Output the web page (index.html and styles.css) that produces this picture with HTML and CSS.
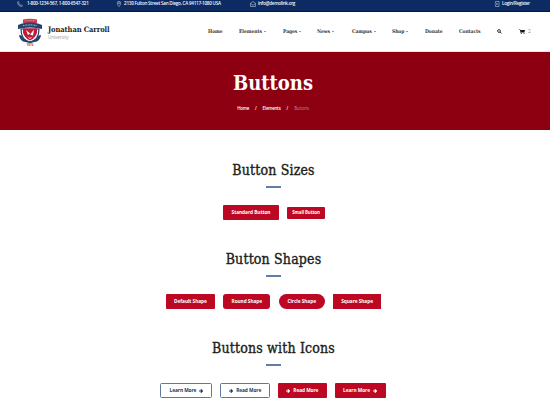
FILE: index.html
```
<!DOCTYPE html>
<html lang="en">
<head>
<meta charset="utf-8">
<title>Buttons - Jonathan Carroll University</title>
<link rel="stylesheet" href="styles.css">
</head>
<body>
<svg width="0" height="0" class="defs"><defs>
<symbol id="arrow" viewBox="0 0 10 10"><path d="M0 5h8M4.500 1L8.500 5L4.500 9" fill="none" stroke="currentColor" stroke-width="3"/></symbol>
</defs></svg>
<div class="topbar">
  <svg class="ico phone" viewBox="0 0 12 12"><path d="M2 1L1 2.500C1 7 5 11 9.500 11L11 10L9 7.800L7.500 8.700C5.800 8 4 6 3.400 4.500L4.300 3Z"/></svg>
  <span class="tel">1-800-1234-567, 1-800-6547-321</span>
  <svg class="ico pin" viewBox="0 0 12 12"><path d="M6 11.300C4 8.700 2.500 6.300 2.500 4.200a3.500 3.500 0 0 1 7 0C9.500 6.300 8 8.700 6 11.300Z"/><circle cx="6" cy="4.300" r="1.300"/></svg>
  <span class="addr">2130 Fulton Street San Diego, CA 94117-1080 USA</span>
  <svg class="ico mail" viewBox="0 0 12 12"><path d="M1 4.500L6 1l5 3.500V11H1ZM1 5l5 3.500L11 5"/></svg>
  <span class="email">info@demolink.org</span>
  <svg class="ico login" viewBox="0 0 12 12"><path d="M3 4V1h7v10H3V8M1 6h6M5 4l2 2l-2 2"/></svg>
  <span class="log">Login/Register</span>
</div>
<header class="header">
  <svg class="logo" viewBox="0 0 26 28">
    <path d="M4 11Q4 22 13 24.500Q22 22 22 11Z" fill="#fff" stroke="#24436f" stroke-width="1.200"/>
    <path d="M6 10.500h14v4q-1 5-7 8Q7 19.500 6 14.500Z" fill="#c51c35"/>
    <path d="M6 1.500Q13 0 20 1.500V5H6Z" fill="#c83c4b"/>
    <path d="M1 7l4-1.500Q13 3.500 21 5.500L25 7v4l-4-.7Q13 8.500 5 10.300L1 11Z" fill="#24436f"/>
    <path d="M6 7.800Q13 6 20 7.800" fill="none" stroke="#a7b9cd" stroke-width="1.100" stroke-dasharray="1 .6"/>
    <path d="M8 2.900Q13 2 18 2.900" fill="none" stroke="#eba9af" stroke-width=".8" stroke-dasharray="1 .6"/>
    <path d="M9 12l4 3.500l-2 1.500ZM17 11.500l-4 5l3 1ZM10.500 18.500l2.500 1.500l2.500-1.500L13 21Z" fill="#fff"/>
    <path d="M2 17l2.500 .5Q7 22 13 23.300Q19 22 21.500 17.500L24 17q-.5 4-4 6.500L13 25L6 23.500Q2.500 21 2 17Z" fill="#24436f"/>
    <text x="13" y="27.900" class="year">1876</text>
  </svg>
  <div class="brand"><strong>Jonathan Carroll</strong><small>University</small></div>
  <nav class="nav">
    <a>Home</a><a class="drop">Elements</a><a class="drop">Pages</a><a class="drop">News</a><a class="drop">Campus</a><a class="drop">Shop</a><a>Donate</a><a>Contacts</a>
    <svg class="search" viewBox="0 0 10 10"><circle cx="4" cy="4" r="2.800"/><path d="M6 6l3 3"/></svg>
    <span class="cart"><svg viewBox="0 0 12 10"><path d="M0 1h2.500L3 2h9l-1 4H4l.2 1H11v1H3.200L2 2H0Z"/><circle cx="4.500" cy="9" r="1"/><circle cx="10" cy="9" r="1"/></svg>2</span>
  </nav>
</header>
<section class="banner">
  <h1>Buttons</h1>
  <p class="crumbs"><span>Home</span><span>/</span><span>Elements</span><span>/</span><span class="current">Buttons</span></p>
</section>
<main>
  <section class="group">
    <h2>Button Sizes</h2><hr>
    <div class="row sizes"><a class="btn standard">Standard Button</a><a class="btn small">Small Button</a></div>
  </section>
  <section class="group">
    <h2>Button Shapes</h2><hr>
    <div class="row shapes"><a class="btn w49">Default Shape</a><a class="btn w47 round">Round Shape</a><a class="btn w46 circle">Circle Shape</a><a class="btn w48 square">Square Shape</a></div>
  </section>
  <section class="group">
    <h2>Buttons with Icons</h2><hr>
    <div class="row icons">
      <a class="btn w52 outline">Learn More<svg><use href="#arrow"/></svg></a>
      <a class="btn w50 outline"><svg><use href="#arrow"/></svg>Read More</a>
      <a class="btn w49"><svg><use href="#arrow"/></svg>Read More</a>
      <a class="btn w51">Learn More<svg><use href="#arrow"/></svg></a>
    </div>
  </section>
</main>
</body>
</html>
```
FILE: styles.css
```
* { box-sizing: border-box; }
body { margin: 0; height: 420px; overflow: hidden; background: #fff; color: #1b1d20; font-family: "Open Sans", sans-serif; }
.defs { display: block; height: 0; }
.topbar { display: flex; align-items: center; height: 12px; padding: 0 0 4px 17px; background: #0d2b63; border-bottom: 1px solid #08114d; color: #f4f6fb; font-size: 4.6px; font-weight: 600; line-height: 7px; white-space: nowrap; }
.ico { flex: none; width: 6px; height: 6px; fill: none; stroke: #b9c4dc; stroke-width: 1.2; }
.phone { margin-right: 4px; }
.tel { width: 89px; letter-spacing: -.25px; }
.pin { margin-right: 2px; }
.addr { width: 126px; letter-spacing: -.25px; }
.mail { margin-right: 2px; }
.email { width: 236px; letter-spacing: -.3px; }
.login { margin-right: 2px; }
.log { letter-spacing: -.3px; }
.header { display: flex; height: 40px; padding-left: 17px; border-bottom: 1px solid #f5e3e5; }
.logo { flex: none; width: 26px; height: 28px; margin-top: 6px; }
.year { font: bold 3px "Open Sans", sans-serif; fill: #c83c4b; text-anchor: middle; }
.brand { display: flex; flex: none; flex-direction: column; width: 165px; padding: 13px 0 0 5px; white-space: nowrap; }
.brand strong { font: bold 7.5px/9px "DejaVu Serif Condensed", "DejaVu Serif", serif; letter-spacing: -.1px; }
.brand small { font-size: 4.6px; line-height: 6px; color: #9a9ea3; letter-spacing: -.1px; }
.nav { display: grid; grid-template-columns: 31px 44px 34px 35px 40px 33px 34px 38px 22px 20px; align-items: center; height: 38px; font: bold 5px/8px "DejaVu Serif Condensed", "DejaVu Serif", serif; letter-spacing: -.08px; color: #34373b; white-space: nowrap; }
.drop::after { content: ""; display: inline-block; margin: 0 0 1px 2px; border: 1.5px solid transparent; border-top-color: #34373b; border-bottom: 0; }
.search { width: 5px; height: 5px; fill: none; stroke: #222; stroke-width: 1.8; }
.cart { display: flex; align-items: center; gap: 3px; font-weight: 400; line-height: 6px; color: #777; }
.cart svg { width: 6px; height: 5px; fill: #161616; }
.banner { height: 78px; padding-top: 19px; background: #8c0012; color: #fff; text-align: center; }
h1 { margin: 0; padding-right: 4px; font: bold 20px/25px "DejaVu Serif Condensed", "DejaVu Serif", serif; letter-spacing: 0; }
.crumbs { display: flex; justify-content: center; gap: 6px; margin: 9px 0 0; padding-right: 4px; font-size: 4.4px; font-weight: 600; line-height: 7px; letter-spacing: -.2px; }
.current { color: #c98188; font-weight: 400; }
main { padding-top: 30px; }
.group { height: 89px; padding-right: 3px; }
h2 { margin: 0; font: 400 14px/21px "DejaVu Serif Condensed", "DejaVu Serif", serif; text-align: center; letter-spacing: .17px; white-space: nowrap; -webkit-text-stroke: .35px; }
hr { width: 15px; height: 2px; margin: 5px auto 0; border: 0; background: #637da9; }
.row { display: flex; justify-content: center; align-items: center; gap: 8px; height: 15px; margin-top: 17px; }
.sizes { padding-left: 1px; }
.shapes { gap: 8.4px; }
.icons { gap: 7.7px; padding-right: 1px; }
.btn { display: flex; flex: none; align-items: center; justify-content: center; gap: 3px; height: 15px; border-radius: 1px; background: #bd0824; color: #fff; font-size: 4.8px; font-weight: 700; line-height: 7px; letter-spacing: -.07px; white-space: nowrap; }
.btn svg { width: 4px; height: 4px; }
.standard { width: 56px; }
.small { width: 38px; height: 12px; font-size: 4.4px; letter-spacing: -.08px; }
.w46 { width: 46px; } .w47 { width: 47px; } .w48 { width: 48px; } .w49 { width: 49px; } .w50 { width: 50px; } .w51 { width: 51px; } .w52 { width: 52px; }
.round { border-radius: 3px; }
.circle { border-radius: 8px; }
.square { border-radius: 0; }
.outline { border: 1px solid #5f769f; background: #fff; color: #173665; border-radius: 1.5px; }
```
